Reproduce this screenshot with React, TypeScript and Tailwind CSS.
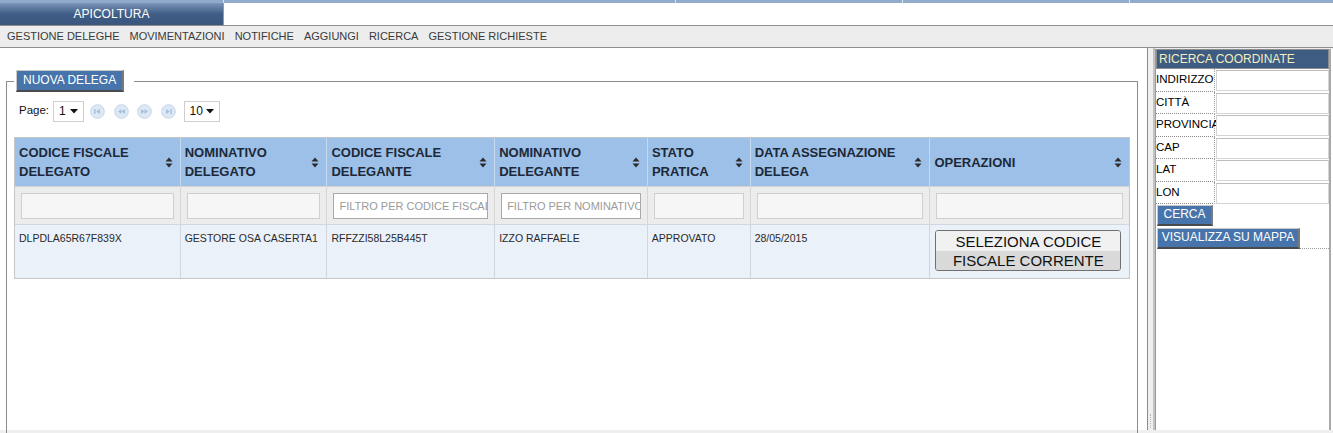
import React from "react";

const menu = [
  "GESTIONE DELEGHE",
  "MOVIMENTAZIONI",
  "NOTIFICHE",
  "AGGIUNGI",
  "RICERCA",
  "GESTIONE RICHIESTE",
];

const columns = [
  { w: "w-[166px]", label: ["CODICE FISCALE", "DELEGATO"], filter: "", value: "DLPDLA65R67F839X" },
  { w: "w-[147px]", label: ["NOMINATIVO", "DELEGATO"], filter: "", value: "GESTORE OSA CASERTA1" },
  { w: "w-[168px]", label: ["CODICE FISCALE", "DELEGANTE"], filter: "FILTRO PER CODICE FISCALE", value: "RFFZZI58L25B445T" },
  { w: "w-[153px]", label: ["NOMINATIVO", "DELEGANTE"], filter: "FILTRO PER NOMINATIVO", value: "IZZO RAFFAELE" },
  { w: "w-[103px]", label: ["STATO", "PRATICA"], filter: "", value: "APPROVATO" },
  { w: "w-[180px]", label: ["DATA ASSEGNAZIONE", "DELEGA"], filter: "", value: "28/05/2015" },
  { w: "w-[199px]", label: ["OPERAZIONI"], filter: "", value: null },
];

const coordFields = ["INDIRIZZO", "CITTÀ", "PROVINCIA", "CAP", "LAT", "LON"];

function SortIcon() {
  return (
    <svg width="8" height="11" viewBox="0 0 8 11" className="shrink-0">
      <path d="M4 0.5 L7.5 4.5 L0.5 4.5 Z" fill="#2b2b2b" />
      <path d="M4 10.5 L7.5 6.5 L0.5 6.5 Z" fill="#2b2b2b" />
    </svg>
  );
}

function PagerIcon({ kind }: { kind: "first" | "prev" | "next" | "last" }) {
  const c = "#a6bfdf";
  return (
    <svg width="15" height="15" viewBox="0 0 15 15">
      <circle cx="7.5" cy="7.5" r="6.8" fill="#dde8f5" stroke="#c3d4ea" strokeWidth="1" />
      {kind === "first" && (
        <>
          <rect x="4.2" y="5" width="1.4" height="5" fill={c} />
          <path d="M10 5 L10 10 L6.2 7.5 Z" fill={c} />
        </>
      )}
      {kind === "prev" && (
        <>
          <path d="M7.5 5 L7.5 10 L4 7.5 Z" fill={c} />
          <path d="M11 5 L11 10 L7.5 7.5 Z" fill={c} />
        </>
      )}
      {kind === "next" && (
        <>
          <path d="M4 5 L4 10 L7.5 7.5 Z" fill={c} />
          <path d="M7.5 5 L7.5 10 L11 7.5 Z" fill={c} />
        </>
      )}
      {kind === "last" && (
        <>
          <path d="M5 5 L5 10 L8.8 7.5 Z" fill={c} />
          <rect x="9.4" y="5" width="1.4" height="5" fill={c} />
        </>
      )}
    </svg>
  );
}

function Caret() {
  return (
    <svg width="8" height="5" viewBox="0 0 8 5">
      <path d="M0 0 L8 0 L4 4.5 Z" fill="#111" />
    </svg>
  );
}

function BlueButton({ children, className = "" }: { children: React.ReactNode; className?: string }) {
  return (
    <div
      className={
        "bg-[#4775ab] text-white text-[12px] leading-[17px] border-t border-l border-t-[#c9c9c9] border-l-[#c9c9c9] border-b-2 border-r-2 border-b-[#4a4a4a] border-r-[#7a7a7a] " +
        className
      }
    >
      {children}
    </div>
  );
}

export default function App() {
  return (
    <div className="w-[1333px] h-[433px] overflow-hidden bg-white font-['Liberation_Sans',Arial,sans-serif] text-[11px] text-[#333]">
      {/* top strip */}
      <div className="flex h-[3px] bg-[#92aacb]">
        <div className="w-[224px] border-r border-[#d9e2ee]" />
        <div className="w-[452px] border-r border-[#d9e2ee]" />
        <div className="w-[227px] border-r border-[#d9e2ee]" />
        <div className="w-[227px] border-r border-[#d9e2ee]" />
        <div className="flex-1" />
      </div>

      {/* tab row */}
      <div className="flex h-[22px]">
        <div className="w-[224px] border-r border-[#9a9a9a] bg-gradient-to-b from-[#7c95b8] via-[#3f5d87] to-[#3a567d] flex items-center justify-center text-white text-[12px]">
          APICOLTURA
        </div>
        <div className="flex-1 bg-white" />
      </div>

      {/* menu */}
      <div className="h-[23px] border-y border-[#8f8f8f] bg-[#ededed] flex items-center gap-[10px] pl-[7px] text-[11px] text-[#3a3a3a]">
        {menu.map((m) => (
          <span key={m} className="whitespace-nowrap">
            {m}
          </span>
        ))}
      </div>

      {/* main */}
      <div className="flex h-[382px]">
        {/* left pane */}
        <div className="w-[1148px] border-r border-[#8c8c8c] pl-[6px] pr-[9px] pt-[22px]">
          <fieldset className="border border-[#8a8a8a] px-[7px] pt-[8px] h-[400px]">
            <legend className="pl-[2px] pr-[10px]">
              <BlueButton className="px-[6px] py-[1px] text-[11px] leading-[17px]">NUOVA DELEGA</BlueButton>
            </legend>

            {/* pager */}
            <div className="flex items-center h-[22px] pl-[5px] text-[11.5px] text-[#111]">
              <span className="mr-[4px]">Page:</span>
              <div className="w-[31px] h-[21px] border border-[#cfcfcf] bg-white flex items-center justify-between px-[5px] text-[12px]">
                <span>1</span>
                <Caret />
              </div>
              <div className="flex items-center gap-[8.5px] ml-[6px] mr-[8px]">
                <PagerIcon kind="first" />
                <PagerIcon kind="prev" />
                <PagerIcon kind="next" />
                <PagerIcon kind="last" />
              </div>
              <div className="w-[36px] h-[21px] border border-[#cfcfcf] bg-white flex items-center justify-between px-[5px] text-[12px]">
                <span>10</span>
                <Caret />
              </div>
            </div>

            {/* table */}
            <div className="mt-[15px] w-[1116px] border border-[#c6c6c6]">
              {/* header */}
              <div className="flex h-[48px] bg-[#9cc0e7]">
                {columns.map((c, i) => (
                  <div
                    key={i}
                    className={
                      c.w +
                      " flex items-center justify-between pl-[4px] pr-[7px] border-r border-[#c5d9ef] last:border-r-0 text-[13px] font-bold leading-[19px] text-[#1d2838]"
                    }
                  >
                    <div>
                      {c.label.map((l) => (
                        <div key={l} className="whitespace-nowrap">
                          {l}
                        </div>
                      ))}
                    </div>
                    <SortIcon />
                  </div>
                ))}
              </div>
              {/* filter row */}
              <div className="flex h-[38px] bg-[#ececec] border-t border-[#d4d4d4]">
                {columns.map((c, i) => (
                  <div key={i} className={c.w + " flex items-center px-[6px] border-r border-[#d6d6d6] last:border-r-0"}>
                    {c.filter ? (
                      <input
                        readOnly
                        placeholder={c.filter}
                        className="w-full h-[26px] bg-white border border-[#a9a9a9] pl-[5px] text-[11px] outline-none placeholder:text-[#9a9a9a]"
                      />
                    ) : (
                      <div className="w-full h-[26px] bg-[#f6f6f6] border border-[#cfcfcf]" />
                    )}
                  </div>
                ))}
              </div>
              {/* data row */}
              <div className="flex h-[54px] bg-[#eaf1f9] border-t border-[#d0d7df]">
                {columns.map((c, i) => (
                  <div key={i} className={c.w + " border-r border-[#cfd6de] last:border-r-0 pl-[4px] pt-[6px] whitespace-nowrap text-[10.5px] text-[#2a2a2a]"}>
                    {c.value !== null ? (
                      c.value
                    ) : (
                      <div className="ml-[1px] mt-[-1px] w-[186px] h-[41px] rounded-[3px] border border-[#707070] overflow-hidden flex flex-col text-[15px] leading-[19px] text-[#111] text-center">
                        <div className="bg-[#f0f0f0] h-[20px] pt-[1px]">SELEZIONA CODICE</div>
                        <div className="bg-[#d9d9d9] flex-1">FISCALE CORRENTE</div>
                      </div>
                    )}
                  </div>
                ))}
              </div>
            </div>
          </fieldset>
        </div>

        {/* splitter */}
        <div className="w-[7px] bg-[#efefef] border-r-2 border-[#c2c2c2] flex flex-col justify-end items-center pb-[2px]">
          <div className="w-[2px] h-[14px] border-l border-dotted border-[#b5b5b5]" />
        </div>

        {/* right pane */}
        <div className="flex-1 flex flex-col bg-white">
          <div className="h-[1px] bg-[#ededed]" />
          <div className="w-[176px] border-l border-[#9a9a9a] border-r-2 border-r-[#a8a8a8] flex-1">
            <div className="h-[20px] bg-[#3e5b81] border border-[#8d8d8d] pl-[2px] flex items-center text-[12px] text-[#f3efc0]">
              RICERCA COORDINATE
            </div>
            {coordFields.map((f) => (
              <div key={f} className="flex h-[22.5px]">
                <div className="w-[59px] border-b border-dotted border-[#8a8a8a] border-r border-r-[#9a9a9a] flex items-center text-[11.5px] text-black whitespace-nowrap overflow-visible">
                  {f}
                </div>
                <div className="flex-1 pl-[1px] pt-[1px]">
                  <div className="h-[21px] border border-[#d4d4d4] border-t-[#bdbdbd] bg-white" />
                </div>
              </div>
            ))}
            <div className="pl-[1px] pt-[1px]">
              <BlueButton className="w-[56px] h-[21px] text-center">CERCA</BlueButton>
              <div className="flex items-end mt-[2px]">
                <BlueButton className="w-[143px] h-[21px] text-center">VISUALIZZA SU MAPPA</BlueButton>
                <div className="flex-1 border-b border-dotted border-[#9a9a9a]" />
              </div>
            </div>
          </div>
        </div>
      </div>

      {/* bottom strip */}
      <div className="h-[3px] bg-[#efefef]" />
    </div>
  );
}
